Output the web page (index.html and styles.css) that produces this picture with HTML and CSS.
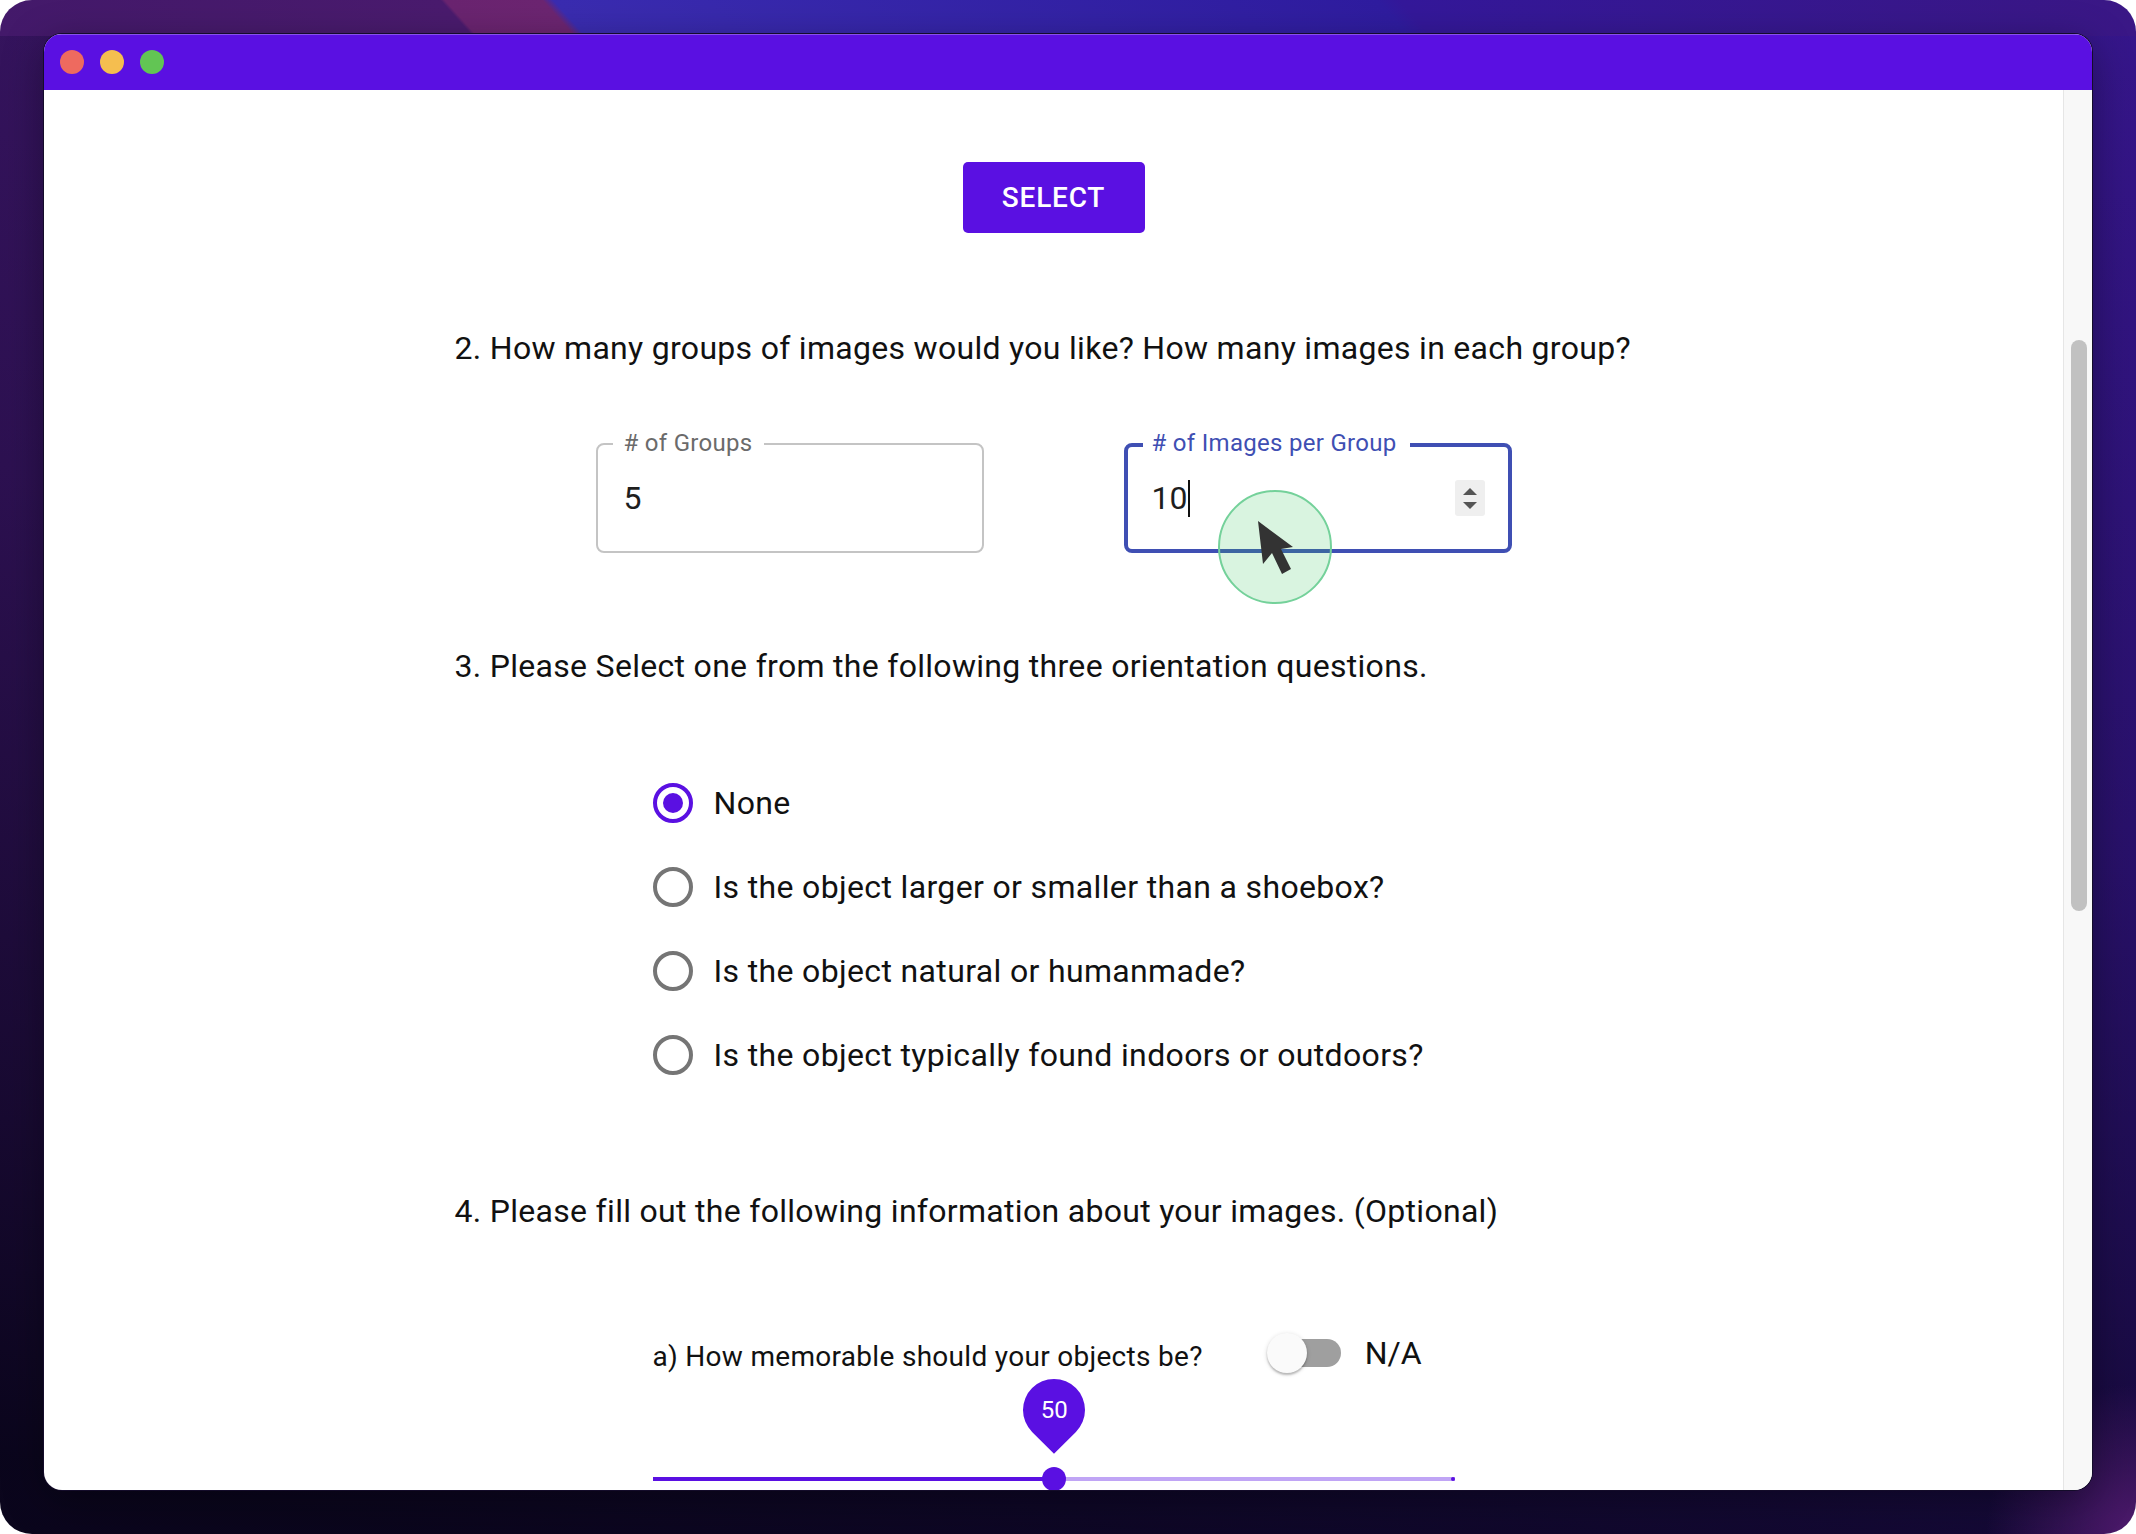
FILE: index.html
```html
<!DOCTYPE html>
<html>
<head>
<meta charset="utf-8">
<title>Image groups</title>
<link rel="stylesheet" href="styles.css">
</head>
<body>
<div class="desktop">
  <div class="window">
    <div class="titlebar">
      <span class="light red"></span>
      <span class="light yellow"></span>
      <span class="light green"></span>
    </div>
    <div class="win-body">
      <div class="content">
        <button class="btn">SELECT</button>

        <div class="form">
          <p class="q q2">2. How many groups of images would you like? How many images in each group?</p>
          <div class="fields">
            <div class="field">
              <span class="field-label">&#35; of Groups</span>
              <span class="field-value">5</span>
            </div>
            <div class="field focused">
              <span class="field-label">&#35; of Images per Group</span>
              <span class="field-value">10<span class="caret"></span></span>
              <span class="spin"><span class="tri up"></span><span class="tri down"></span></span>
            </div>
          </div>

          <p class="q q3">3. Please Select one from the following three orientation questions.</p>
          <div class="inner radios">
            <div class="radio-row"><span class="radio on"></span><span class="radio-label">None</span></div>
            <div class="radio-row"><span class="radio"></span><span class="radio-label">Is the object larger or smaller than a shoebox?</span></div>
            <div class="radio-row"><span class="radio"></span><span class="radio-label">Is the object natural or humanmade?</span></div>
            <div class="radio-row"><span class="radio"></span><span class="radio-label">Is the object typically found indoors or outdoors?</span></div>
          </div>

          <p class="q q4">4. Please fill out the following information about your images. (Optional)</p>
          <div class="inner memo">
            <div class="memo-row">
              <span class="memo-label">a) How memorable should your objects be?</span>
              <span class="switch"><span class="switch-track"></span><span class="switch-thumb"></span></span>
              <span class="na">N/A</span>
            </div>
            <div class="slider">
              <div class="rail"><div class="rail-active"></div></div>
              <div class="mark"></div>
              <div class="thumb"></div>
              <div class="bubble"><span class="bubble-text">50</span></div>
            </div>
          </div>
        </div>

        <svg class="pointer" width="116" height="116" viewBox="0 0 116 116">
          <circle cx="58" cy="58" r="56" fill="rgba(52,199,89,0.19)" stroke="#74d19a" stroke-width="2"/>
          <path d="M41 32 L46 75 L55 64 L65 85 L74 80 L64 60 L76 58 Z" fill="#333"/>
        </svg>
      </div>
      <div class="scrollbar"><div class="scroll-thumb"></div></div>
    </div>
  </div>
</div>
</body>
</html>
```

FILE: styles.css
```css
html, body {
  margin: 0;
  padding: 0;
  background: #ffffff;
}

body {
  width: 2136px;
  height: 1534px;
  overflow: hidden;
  font-family: Roboto, "Noto Sans", "Liberation Sans", sans-serif;
}

.desktop {
  width: 2136px;
  height: 1534px;
  box-sizing: border-box;
  padding: 34px 44px 44px 44px;
  border-radius: 32px;
  background:
    linear-gradient(48deg, #43196a 0%, #4a1b6e 21.8%, #6a2470 22%, #6c2571 26.5%, #3a2cb0 27%, #2f1c9f 65%, #34189a 66%, #3a1785 100%) top left / 100% 36px no-repeat,
    radial-gradient(circle at 100% 100%, rgba(85, 28, 115, 0.9) 0px, rgba(85, 28, 115, 0) 150px),
    linear-gradient(190deg, rgba(9, 5, 26, 0) 0%, rgba(9, 5, 26, 0.3) 45%, rgba(9, 5, 26, 0.7) 78%, rgba(9, 5, 26, 0.97) 96%),
    linear-gradient(90deg, #3c1668 0%, #2e1374 50%, #36168c 100%);
}

.window {
  width: 2048px;
  height: 1456px;
  border-radius: 18px;
  overflow: hidden;
  display: flex;
  flex-direction: column;
  background: #fff;
  box-shadow: 0 0 0 1px #140c2a, 0 10px 40px rgba(0, 0, 0, 0.35);
}

.titlebar {
  height: 56px;
  flex: none;
  background: #5a10e2;
  box-shadow: inset 0 1px 0 rgba(255, 255, 255, 0.28);
  display: flex;
  align-items: center;
  gap: 16px;
  padding-left: 16px;
}

.light {
  width: 24px;
  height: 24px;
  border-radius: 50%;
}
.light.red { background: #ee6a5f; }
.light.yellow { background: #f5be4f; }
.light.green { background: #62c554; }

.win-body {
  flex: 1;
  display: flex;
  min-height: 0;
}

.content {
  flex: 1;
  position: relative;
  overflow: hidden;
  display: flex;
  flex-direction: column;
  align-items: center;
  padding-top: 72px;
}

.scrollbar {
  width: 29px;
  flex: none;
  background: #f8f8f8;
  border-left: 1px solid #e6e6e6;
  padding-top: 250px;
  padding-left: 7px;
  box-sizing: border-box;
}

.scroll-thumb {
  width: 16px;
  height: 571px;
  border-radius: 8px;
  background: #c1c1c1;
}

.btn {
  width: 182px;
  height: 71px;
  border: none;
  border-radius: 5px;
  background: #5a10e2;
  color: #fff;
  font-family: Roboto, "Noto Sans", sans-serif;
  font-weight: 500;
  font-size: 28px;
  letter-spacing: 0.8px;
  padding: 0;
  flex: none;
}

.form {
  width: 1198px;
  display: flex;
  flex-direction: column;
  align-items: center;
}

.q {
  align-self: stretch;
  margin: 0;
  font-size: 32px;
  letter-spacing: 0.3px;
  line-height: 36px;
  color: #111;
}

.q2 { margin-top: 97px; }
.q3 { margin-top: 95px; }
.q4 { margin-top: 96px; }

.fields {
  display: flex;
  gap: 140px;
  margin-top: 77px;
}

.field {
  position: relative;
  width: 388px;
  height: 110px;
  box-sizing: border-box;
  border: 2px solid #c4c4c4;
  border-radius: 8px;
  display: flex;
  align-items: center;
  padding: 0 24px 0 26px;
}

.field-label {
  position: absolute;
  top: -14px;
  left: 15px;
  padding: 0 11px;
  background: #fff;
  font-size: 24px;
  letter-spacing: 0.3px;
  line-height: 24px;
  color: #6b6b6b;
}

.field-value {
  font-size: 32px;
  line-height: 40px;
  color: #1e1e1e;
  display: flex;
  align-items: center;
  flex: 1;
}

.field.focused {
  border: 4px solid #3f4fb3;
  padding: 0 23px 0 24px;
}

.field.focused .field-label {
  top: -16px;
  left: 15px;
  padding: 0 13px 0 9px;
  color: #3f4fb3;
}

.caret {
  display: inline-block;
  width: 2px;
  height: 37px;
  background: #111;
  margin-left: 1px;
}

.spin {
  width: 30px;
  height: 36px;
  border-radius: 3px;
  background: #efefef;
  display: flex;
  flex-direction: column;
  align-items: center;
  justify-content: center;
  gap: 7px;
}

.tri {
  width: 0;
  height: 0;
  border-left: 7px solid transparent;
  border-right: 7px solid transparent;
}
.tri.up { border-bottom: 7px solid #555; }
.tri.down { border-top: 7px solid #555; }

.inner {
  width: 802px;
  display: flex;
  flex-direction: column;
}

.radios {
  margin-top: 77px;
}

.radio-row {
  height: 84px;
  display: flex;
  align-items: center;
  gap: 21px;
}

.radio {
  width: 40px;
  height: 40px;
  box-sizing: border-box;
  border: 4px solid #757575;
  border-radius: 50%;
  display: flex;
  align-items: center;
  justify-content: center;
  flex: none;
}

.radio.on {
  border-color: #5a10e2;
}

.radio.on::after {
  content: "";
  width: 20px;
  height: 20px;
  border-radius: 50%;
  background: #5a10e2;
}

.radio-label {
  font-size: 32px;
  letter-spacing: 0.35px;
  color: #111;
}

.memo {
  margin-top: 100px;
}

.memo-row {
  height: 48px;
  display: flex;
  align-items: center;
}

.memo-label {
  font-size: 28px;
  letter-spacing: 0.3px;
  color: #111;
  padding-top: 6px;
}

.switch {
  position: relative;
  width: 74px;
  height: 40px;
  margin-left: 64px;
  display: flex;
  align-items: center;
  justify-content: flex-end;
}

.switch-track {
  width: 70px;
  height: 28px;
  border-radius: 14px;
  background: #9f9f9f;
}

.switch-thumb {
  position: absolute;
  left: 0;
  top: 0;
  width: 40px;
  height: 40px;
  border-radius: 50%;
  background: #fafafa;
  box-shadow: 0 2px 2px rgba(0, 0, 0, 0.22), 0 1px 5px rgba(0, 0, 0, 0.14);
}

.na {
  font-size: 32px;
  color: #111;
  margin-left: 24px;
}

.slider {
  position: relative;
  height: 24px;
  margin-top: 90px;
}

.rail {
  position: absolute;
  left: 0;
  right: 0;
  top: 10px;
  height: 4px;
  background: #c0a5f5;
}

.rail-active {
  width: 50%;
  height: 100%;
  background: #5a10e2;
}

.mark {
  position: absolute;
  right: 0;
  top: 10px;
  width: 4px;
  height: 4px;
  border-radius: 50%;
  background: #5a10e2;
}

.thumb {
  position: absolute;
  left: calc(50% - 12px);
  top: 0;
  width: 24px;
  height: 24px;
  border-radius: 50%;
  background: #5a10e2;
}

.bubble {
  position: absolute;
  left: calc(50% - 31px);
  top: -88px;
  width: 62px;
  height: 62px;
  border-radius: 50% 50% 50% 0;
  background: #5a10e2;
  transform: rotate(-45deg);
  display: flex;
  align-items: center;
  justify-content: center;
}

.bubble-text {
  transform: rotate(45deg);
  color: #fff;
  font-size: 24px;
}

.pointer {
  position: absolute;
  left: 1173px;
  top: 399px;
}
```
